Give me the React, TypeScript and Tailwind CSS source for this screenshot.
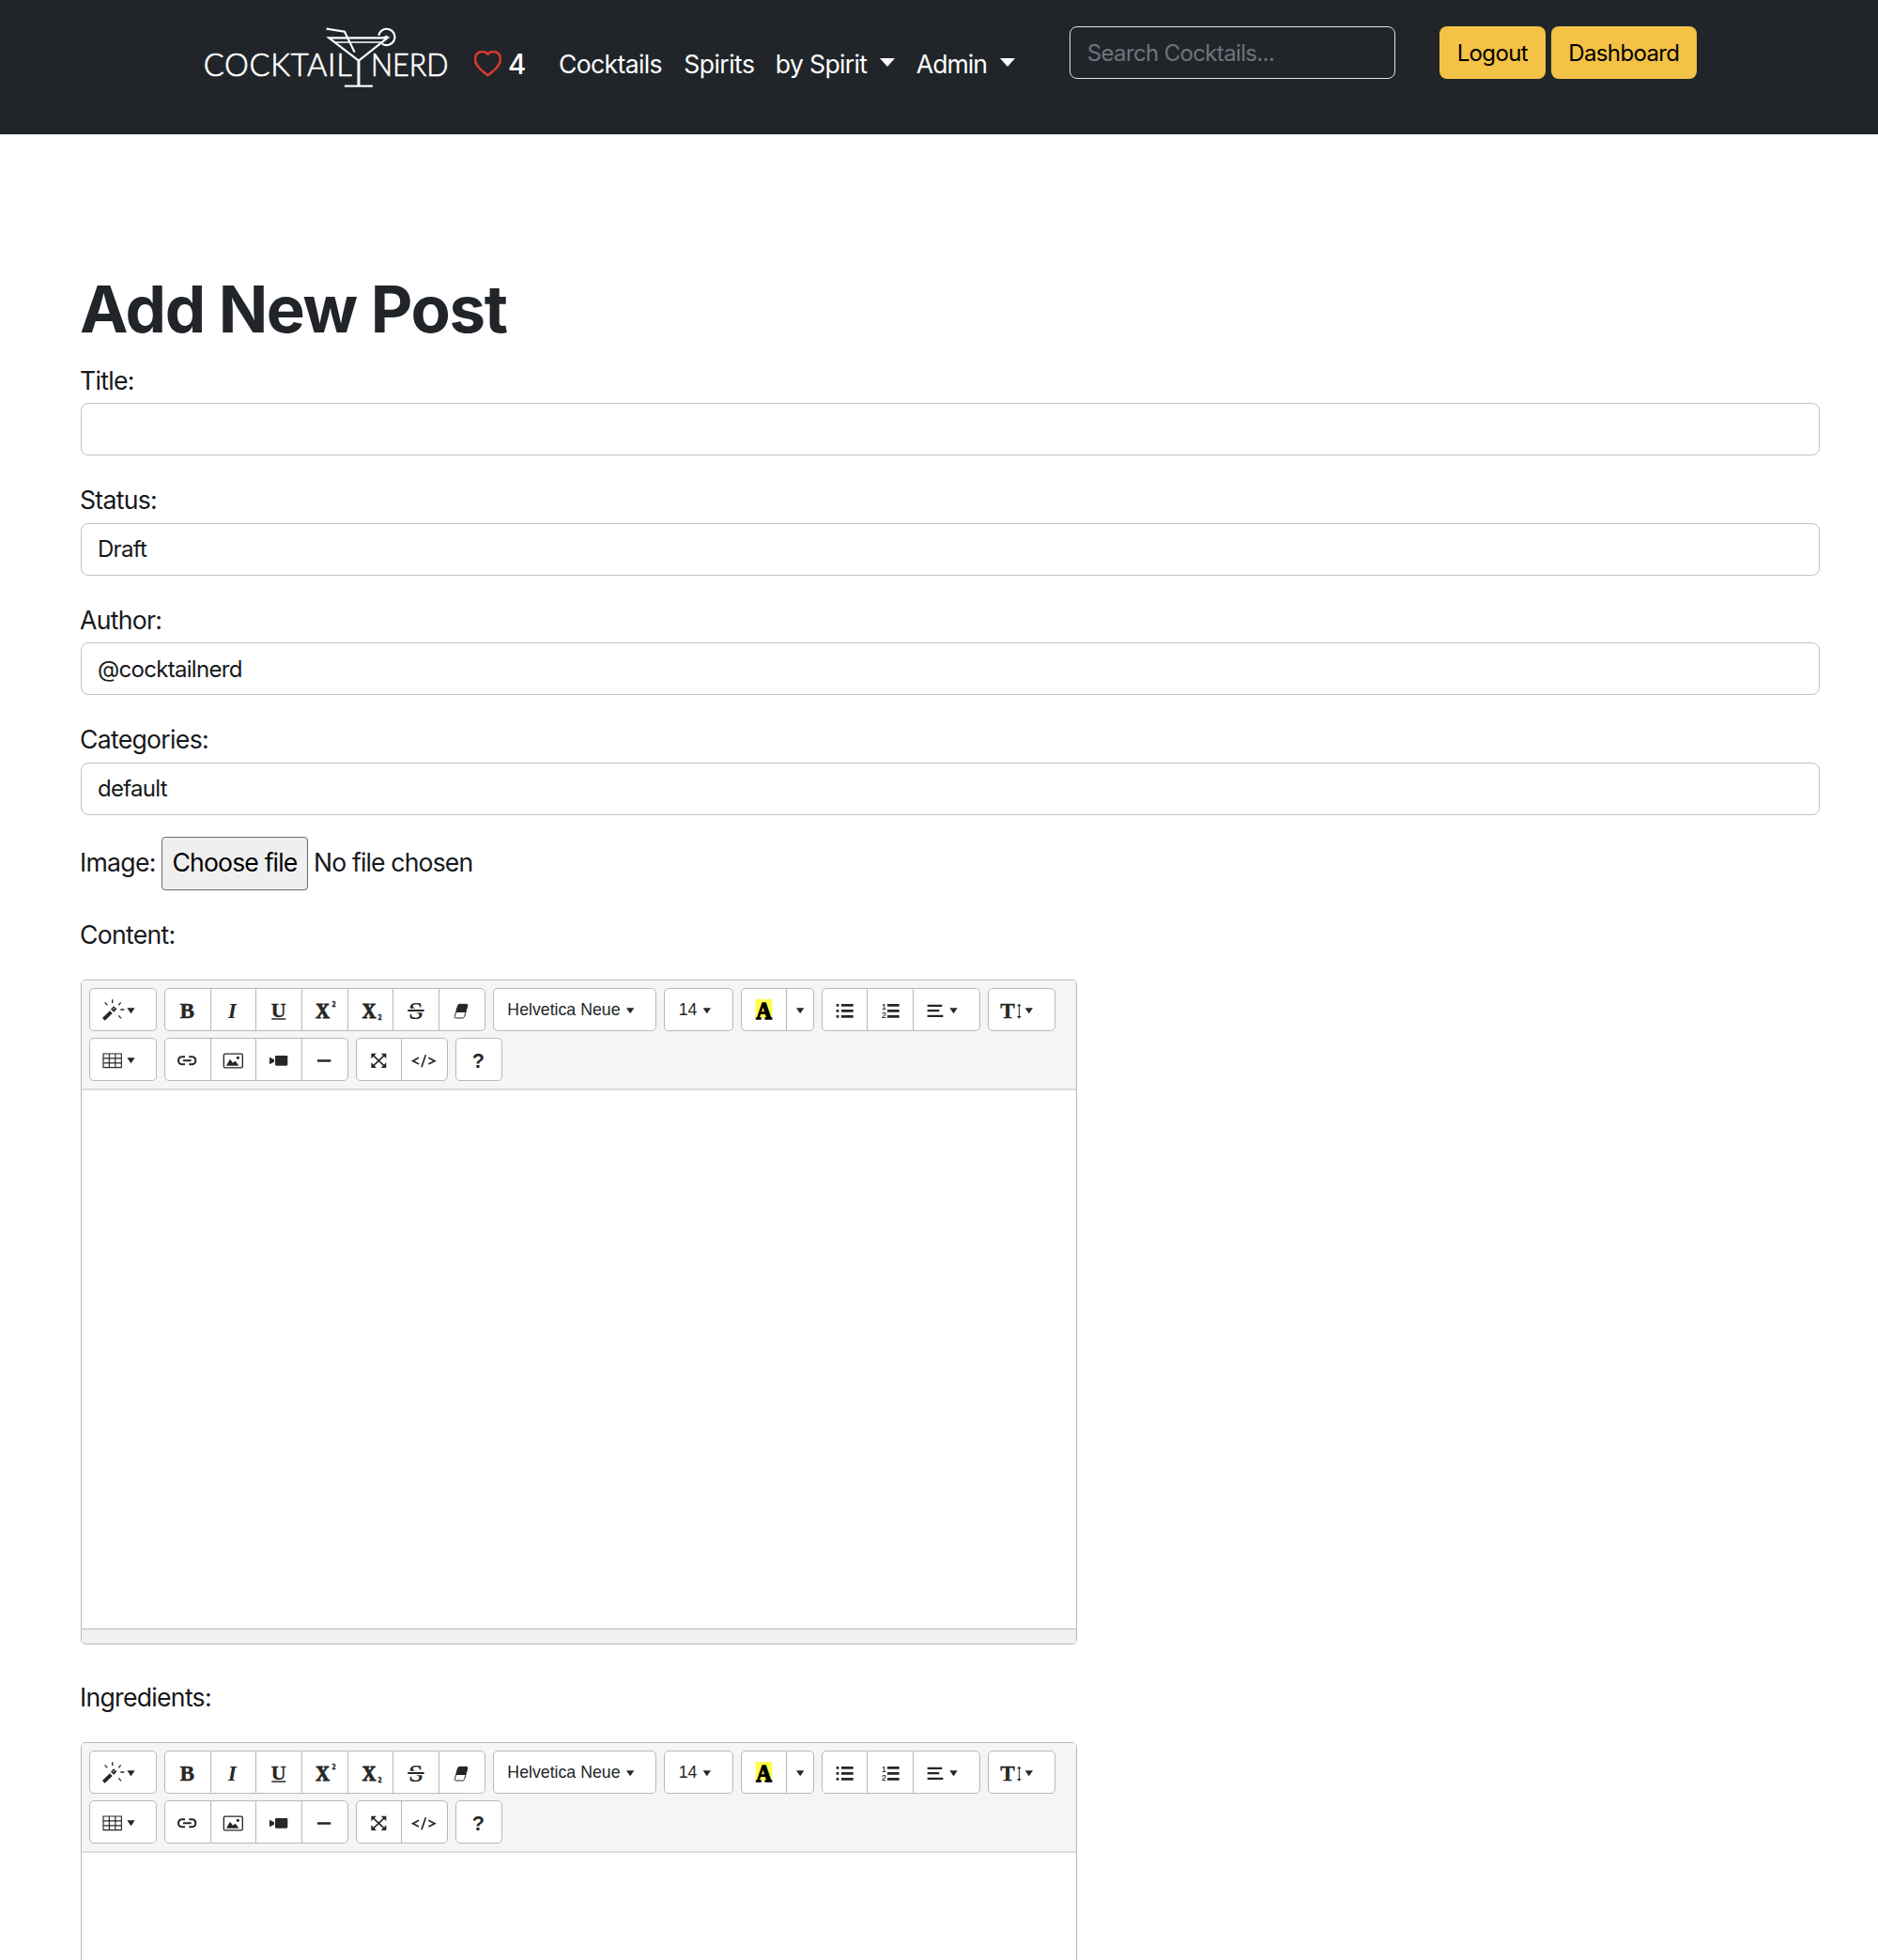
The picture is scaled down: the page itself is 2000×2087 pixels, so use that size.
import type { ReactNode } from "react";
import { BsHeart } from "react-icons/bs";

const INK = "#262626";

function Logo() {
  return (
    <svg viewBox="50 55 780 196" className="mt-[28.3px] h-[65.3px] w-[260px] shrink-0 overflow-visible" fill="none" stroke="#fff">
      <text x="49" y="214" fontFamily="Lato, sans-serif" fontWeight="300" fontSize="98" fill="#fff" strokeWidth="2" textLength="474" lengthAdjust="spacing">
        COCKTAIL
      </text>
      <text x="584" y="214" fontFamily="Lato, sans-serif" fontWeight="300" fontSize="98" fill="#fff" strokeWidth="2" textLength="248" lengthAdjust="spacingAndGlyphs">
        NERD
      </text>
      <path d="M442 63 500 72 532 138" strokeWidth="6.500" />
      <path d="M450 92H637L545 165Z" strokeWidth="6.500" />
      <path d="M466 106H620" strokeWidth="4" />
      <path d="M545 165V245" strokeWidth="9" />
      <path d="M500 246H590" strokeWidth="6.500" />
      <path d="M609 84A26 26 0 1 1 620 111" strokeWidth="6.500" />
      <path d="M622 92 637 86" strokeWidth="5" />
    </svg>
  );
}

function NavCaret() {
  return (
    <svg viewBox="0 0 16 9" className="-mt-1 h-[9px] w-4 shrink-0">
      <path d="M0 0H16L8 9Z" fill="#fff" />
    </svg>
  );
}

function Header() {
  return (
    <header className="flex h-[143px] items-start bg-[#212529] pl-[217px] text-white">
      <Logo />
      <nav className="mt-12 flex h-10 items-center text-[26.6px] leading-10 whitespace-nowrap">
        <BsHeart className="mr-[7px] ml-7 size-[29px] shrink-0 text-[#dc3a2e]" stroke="currentColor" strokeWidth={0.5} />
        <span className="w-[54px] text-[29.5px] font-medium">4</span>
        <a className="w-[133.3px] tracking-[-0.66px]">Cocktails</a>
        <a className="w-[97.5px] tracking-[-0.58px]">Spirits</a>
        <a className="w-[111px] tracking-[-0.66px]">by Spirit</a>
        <NavCaret />
        <a className="ml-[23px] w-[89px] tracking-[-1px]">Admin</a>
        <NavCaret />
      </nav>
      <div className="mt-7 ml-[58px] flex h-14 w-[347px] items-center rounded-lg border border-[#dfe3e6] pt-px pl-[18px] text-2xl tracking-[-0.65px] text-[#6c757d]">
        Search Cocktails...
      </div>
      <div className="mt-7 ml-[47px] flex gap-[6px] text-2xl tracking-[-0.65px] text-black">
        <button className="h-14 w-[113px] rounded-lg bg-[#f4c244] pt-px">Logout</button>
        <button className="h-14 w-[155px] rounded-lg bg-[#f4c244] pt-px">Dashboard</button>
      </div>
    </header>
  );
}

function Label({ children }: { children: ReactNode }) {
  return <label className="-ml-px block h-10 text-[26.6px] leading-10 tracking-[-0.7px]">{children}</label>;
}

function Field({ label, value }: { label: string; value?: string }) {
  return (
    <div className="mb-[26.7px]">
      <Label>{label}</Label>
      <div className="mt-[4.7px] flex h-14 w-[1852px] items-center rounded-lg border border-[#bfc2c7] pt-px pl-[17px] text-2xl tracking-[-0.7px]">
        {value}
      </div>
    </div>
  );
}

function Group({ width, children }: { width: string; children: ReactNode }) {
  return (
    <div className={`${width} flex h-[46px] divide-x divide-[#b8b8b8] overflow-hidden rounded-[5px] border border-[#b8b8b8] bg-white`}>
      {children}
    </div>
  );
}

/* Icons are drawn on a canvas of three units per pixel, 138 units tall. */
function Cell({ x, w, children }: { x: number; w: number; children: ReactNode }) {
  return (
    <button className="flex min-w-0 items-center justify-center" style={{ flex: `${w} 1 0` }}>
      <svg viewBox={`${x} 50 ${w} 138`} className="h-[46px] shrink-0" style={{ width: w / 3 }} fill={INK} stroke="none">
        {children}
      </svg>
    </button>
  );
}

function Caret({ x, y = 114 }: { x: number; y?: number }) {
  return <path d={`M${x} ${y}h25l-12.5 17.5z`} />;
}

const serif = { fontFamily: "'Liberation Serif', serif", fontWeight: 700 };
const sans = { fontFamily: "'Liberation Sans', sans-serif" };

function Toolbar() {
  return (
    <div className="flex h-[117px] flex-col gap-[7px] border-b-2 border-[#dcdcdc] bg-[#f5f5f5] pt-2 pl-[7.5px]">
      <div className="flex gap-2">
        <Group width="w-[72.5px]">
          <Cell x={44} w={217}>
            <path d="M90 150 114 127" stroke={INK} strokeWidth="12" />
            <path d="M122 108 132 117 123 127 113 118Z" />
            <path d="M119 119 125 114" stroke="#fff" strokeWidth="2.500" />
            <path d="M118 87V98M94 96 102 105M145 96 138 105M144 119H156M138 138 146 147" stroke={INK} strokeWidth="4" />
            <Caret x={165} />
          </Cell>
        </Group>
        <Group width="w-[341.5px]">
          <Cell x={287} w={146}>
            <text x="357" y="147" textAnchor="middle" fontSize="70" stroke={INK} strokeWidth="1.2" {...serif}>B</text>
          </Cell>
          <Cell x={433} w={146}>
            <text x="503" y="147" textAnchor="middle" fontSize="70" fontStyle="italic" {...serif}>I</text>
          </Cell>
          <Cell x={579} w={146}>
            <text x="650" y="143" textAnchor="middle" fontSize="66" stroke={INK} strokeWidth="1" {...serif}>U</text>
            <path d="M628 147H673V151H628Z" />
          </Cell>
          <Cell x={-25} w={146}>
            <text x="43" y="147" textAnchor="middle" fontSize="68" stroke={INK} strokeWidth="3" textLength="44" lengthAdjust="spacingAndGlyphs" {...serif}>X</text>
            <text x="79" y="111" textAnchor="middle" fontSize="22" stroke={INK} strokeWidth="1.5" {...serif}>2</text>
          </Cell>
          <Cell x={121} w={146}>
            <text x="190" y="147" textAnchor="middle" fontSize="68" stroke={INK} strokeWidth="3" textLength="44" lengthAdjust="spacingAndGlyphs" {...serif}>X</text>
            <text x="225" y="153" textAnchor="middle" fontSize="22" stroke={INK} strokeWidth="1.5" {...serif}>2</text>
          </Cell>
          <Cell x={267} w={146}>
            <text x="339" y="149" textAnchor="middle" fontSize="77" textLength="46" lengthAdjust="spacingAndGlyphs" {...serif}>S</text>
            <path d="M313 115.500H365V128.500H313Z" fill="#fff" />
            <path d="M313 119H365V125H313Z" />
          </Cell>
          <Cell x={413} w={146}>
            <path d="M480 102H502Q507 102 505.500 107L496 141Q494.500 146 490 146H468Q463.500 146 465 141L474.500 107Q476 102 480 102Z" fill="#fff" stroke={INK} strokeWidth="3" />
            <path d="M480 102H502Q507 102 505.500 107L499.500 128H469L474.500 107Q476 102 480 102Z" />
          </Cell>
        </Group>
        <Group width="w-[174.5px]">
          <Cell x={584} w={522}>
            <text x="630" y="136" fontSize="53.2" {...sans}>Helvetica Neue</text>
            <Caret x={1010} />
          </Cell>
        </Group>
        <Group width="w-[74px]">
          <Cell x={381} w={220}>
            <text x="428" y="136" fontSize="53.2" {...sans}>14</text>
            <Caret x={506} />
          </Cell>
        </Group>
        <Group width="w-[77.5px]">
          <Cell x={626} w={147}>
            <path d="M673 86H726V147H673Z" fill="#ffff4a" />
            <text x="700" y="148" textAnchor="middle" fontSize="74" fill="#000" stroke="#000" strokeWidth="4" textLength="50" lengthAdjust="spacingAndGlyphs" {...serif}>A</text>
          </Cell>
          <Cell x={773} w={85}>
            <Caret x={803} />
          </Cell>
        </Group>
        <Group width="w-[169.5px]">
          <Cell x={43} w={147}>
            <path d="M90 101h8v8h-8zM90 119h8v8h-8zM90 137h8v8h-8zM106 101h38v8h-38zM106 119h38v8h-38zM106 137h38v8h-38z" />
          </Cell>
          <Cell x={190} w={147}>
            <path d="M253 101h38v8h-38zM253 119h38v8h-38zM253 137h38v8h-38z" />
            <text x="242" y="118" textAnchor="middle" fontSize="26" stroke={INK} strokeWidth=".6" {...sans}>1</text>
            <text x="242" y="146" textAnchor="middle" fontSize="26" stroke={INK} strokeWidth=".6" {...sans}>2</text>
          </Cell>
          <Cell x={337} w={214}>
            <path d="M384 103h47v7h-47zM384 119h38v7h-38zM384 136h50v7h-50z" />
            <Caret x={455} />
          </Cell>
        </Group>
        <Group width="w-[72px]">
          <Cell x={577} w={214}>
            <text x="640" y="147" textAnchor="middle" fontSize="70" stroke={INK} strokeWidth="1" {...serif}>T</text>
            <path d="M677 104V144" stroke={INK} strokeWidth="3" />
            <path d="M677 100 684 108H670ZM677 148 684 140H670Z" />
            <Caret x={696} />
          </Cell>
        </Group>
      </div>
      <div className="flex gap-2">
        <Group width="w-[72.5px]">
          <Cell x={44} w={217}>
            <path d="M89 101H147V145H89ZM89 115.500H147M89 130.500H147M108 101V145M127.500 101V145" fill="none" stroke={INK} strokeWidth="3.500" />
            <Caret x={165} />
          </Cell>
        </Group>
        <Group width="w-[195.5px]">
          <Cell x={287} w={146}>
            <path d="M353 111H343Q332 112 332 123Q332 134 343 135H353M366 111H376Q387 112 387 123Q387 134 376 135H366M347 123H373" fill="none" stroke={INK} strokeWidth="6" />
          </Cell>
          <Cell x={433} w={146}>
            <rect x="476" y="101.500" width="60" height="44" rx="4" fill="none" stroke={INK} strokeWidth="4" />
            <path d="M484 139 496 118 505 130 513 124 524 139ZM516 114a5 5 0 1 0 10 0a5 5 0 1 0-10 0z" />
          </Cell>
          <Cell x={579} w={146}>
            <rect x="639" y="107" width="40" height="32" rx="4" />
            <path d="M621 112 636 120V127L621 135Z" />
          </Cell>
          <Cell x={-25} w={146}>
            <path d="M26 120H69V127H26Z" />
          </Cell>
        </Group>
        <Group width="w-[98px]">
          <Cell x={146} w={147}>
            <path d="M200 105 238 141M238 105 200 141" stroke={INK} strokeWidth="4.500" />
            <path d="M195 100H212L195 117ZM243 100H226L243 117ZM195 146H212L195 129ZM243 146H226L243 129Z" />
          </Cell>
          <Cell x={293} w={147}>
            <path d="M350 114 331 124 350 134M372 105 359 144M381 114 401 124 381 134" fill="none" stroke={INK} strokeWidth="5" />
          </Cell>
        </Group>
        <Group width="w-[50px]">
          <Cell x={465} w={148}>
            <text x="538" y="147" textAnchor="middle" fontSize="65" fontWeight="700" {...sans}>?</text>
          </Cell>
        </Group>
      </div>
    </div>
  );
}

function Editor() {
  return (
    <div className="flex h-[708px] w-[1061px] shrink-0 flex-col overflow-hidden rounded-[5px] border border-[#b8b8b8] bg-white">
      <Toolbar />
      <div className="flex-1" />
      <div className="h-4 border-t border-[#b8b8b8] bg-[#f0f0f0]" />
    </div>
  );
}

export default function App() {
  return (
    <div className="h-[2087px] w-[2000px] overflow-hidden bg-white font-['Inter',sans-serif] text-[#16181b]">
      <Header />
      <main className="pt-[144px] pl-[86px]">
        <h1 className="mb-[14.8px] -ml-px h-[83px] pt-px text-[69px] leading-[83px] font-bold tracking-[-1.4px] text-[#212529]">Add New Post</h1>
        <Field label="Title:" />
        <Field label="Status:" value="Draft" />
        <Field label="Author:" value="@cocktailnerd" />
        <Field label="Categories:" value="default" />
        <div className="-mt-[3.5px] mb-[28px] flex h-[56.5px] items-center text-[26.6px] tracking-[-0.85px] whitespace-nowrap">
          <span className="-ml-px w-[87px] tracking-[-0.7px]">Image:</span>
          <button className="mr-[6px] h-[57px] w-[156px] rounded-[4px] border border-[#6b6b6b] bg-[#efefef] text-black">Choose file</button>
          <span>No file chosen</span>
        </div>
        <Label>Content:</Label>
        <div className="mt-7 mb-[35.5px]">
          <Editor />
        </div>
        <Label>Ingredients:</Label>
        <div className="mt-[28.3px]">
          <Editor />
        </div>
      </main>
    </div>
  );
}
